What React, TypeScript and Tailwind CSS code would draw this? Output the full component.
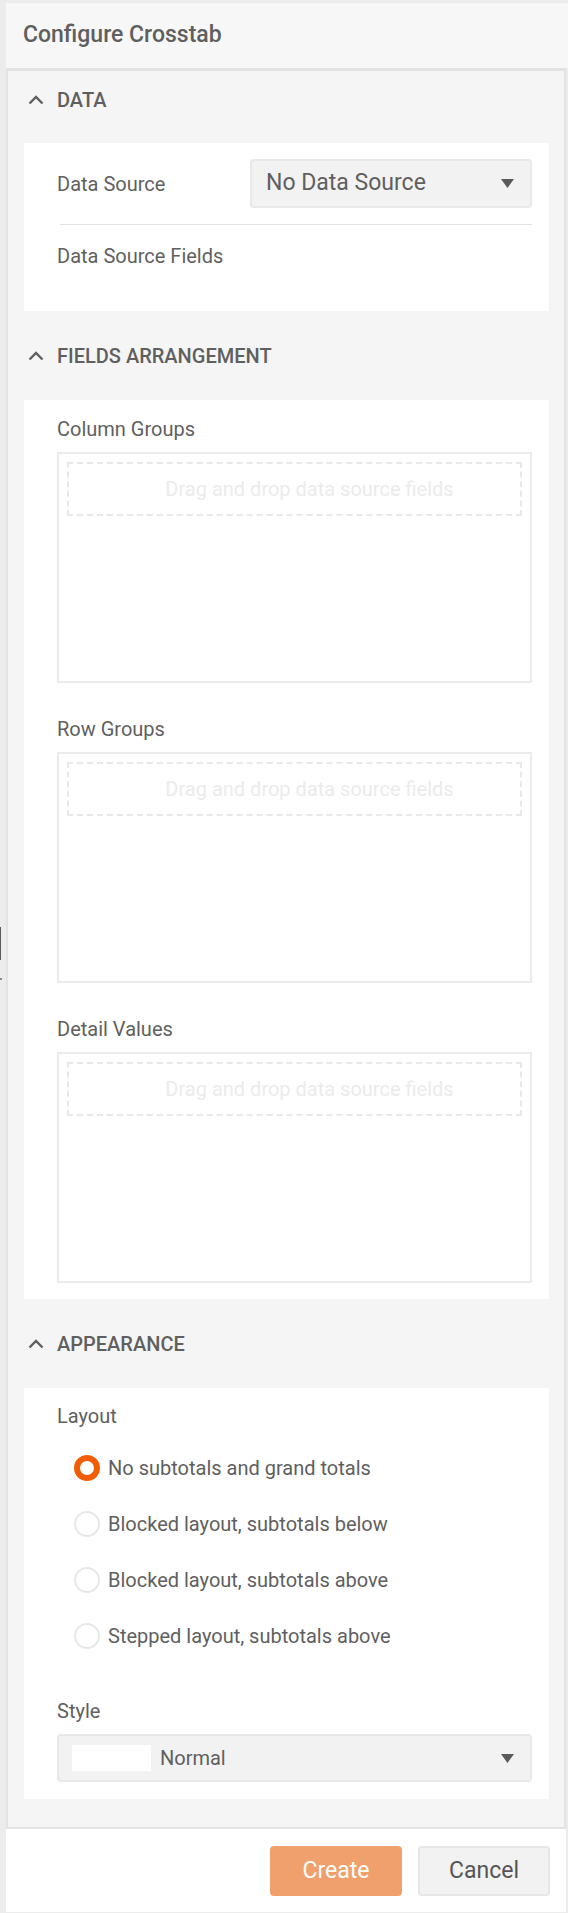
import React, { useState } from 'react';

const Chevron = () => (
  <svg width="16" height="10" viewBox="0 0 16 10" className="shrink-0">
    <polyline points="1.5,8.5 8,2 14.5,8.5" fill="none" stroke="#5f5f5f" strokeWidth="2.4" />
  </svg>
);

const Caret = () => (
  <svg width="13" height="9" viewBox="0 0 13 9" className="shrink-0">
    <polygon points="0,0 13,0 6.5,9" fill="#5a5a5a" />
  </svg>
);

const GroupHeader: React.FC<{ title: string; className: string }> = ({ title, className }) => (
  <div className={`flex items-center pl-[20px] ${className}`}>
    <Chevron />
    <span className="ml-[13px] text-[20px] font-medium uppercase text-[#5f5f5f]">{title}</span>
  </div>
);

const Card: React.FC<{ className?: string; children: React.ReactNode }> = ({ className = '', children }) => (
  <div className={`ml-[16px] mr-[15px] bg-white pl-[33px] pr-[17px] ${className}`}>{children}</div>
);

const DropZone = () => (
  <div className="h-[231px] border-2 border-[#ebebeb] p-[8px]">
    <div className="flex h-[54px] items-center justify-center border-2 border-dashed border-[#e8e8e8] pl-[30px] text-[20px] text-[#ebebeb]">
      Drag and drop data source fields
    </div>
  </div>
);

const LAYOUTS = [
  'No subtotals and grand totals',
  'Blocked layout, subtotals below',
  'Blocked layout, subtotals above',
  'Stepped layout, subtotals above',
];

export default function App() {
  const [layout, setLayout] = useState(0);

  return (
    <div className="relative h-[1913px] w-[568px] overflow-hidden bg-[#ececec] pl-[6px] pt-[3px] font-['Roboto',sans-serif] text-[#5f5f5f]">
      {/* stray mark from the page behind the dialog */}
      <div className="absolute left-0 top-[927px] h-[33px] w-[1px] bg-[#5a5a5a]" />
      <div className="absolute left-0 top-[978px] h-[2px] w-[2px] bg-[#8a8a8a]" />

      <div className="flex h-[65px] w-[562px] items-center bg-[#f7f7f7] pl-[17px] text-[23px] font-medium">
        Configure Crosstab
      </div>

      <div className="w-[560px] border-x-2 border-b-2 border-t-[3px] border-[#e3e3e3] bg-[#f5f5f5]">
        <GroupHeader title="Data" className="h-[58px] mb-[14px]" />
        <Card className="h-[168px] pt-[16px]">
          <div className="flex items-center">
            <div className="w-[193px] text-[20px]">Data Source</div>
            <div className="flex h-[49px] flex-1 items-center justify-between rounded-[4px] border-2 border-[#e8e8e8] bg-[#f2f2f2] pl-[14px] pr-[16px] text-[23px]">
              <span>No Data Source</span>
              <Caret />
            </div>
          </div>
          <div className="ml-[3px] mt-[16px] h-[1px] bg-[#e4e4e4]" />
          <div className="mt-[17px] text-[20px] leading-[28px]">Data Source Fields</div>
        </Card>

        <GroupHeader title="Fields Arrangement" className="h-[89px]" />
        <Card className="pb-[16px] pt-[15px]">
          <div className="text-[20px] leading-[28px]">Column Groups</div>
          <div className="mt-[9px]">
            <DropZone />
          </div>
          <div className="mt-[32px] text-[20px] leading-[28px]">Row Groups</div>
          <div className="mt-[9px]">
            <DropZone />
          </div>
          <div className="mt-[32px] text-[20px] leading-[28px]">Detail Values</div>
          <div className="mt-[9px]">
            <DropZone />
          </div>
        </Card>

        <GroupHeader title="Appearance" className="h-[89px]" />
        <Card className="pb-[17px] pt-[14px]">
          <div className="text-[20px] leading-[28px]">Layout</div>
          <div className="mt-[10px] flex flex-col">
            {LAYOUTS.map((label, i) => (
              <button
                key={label}
                onClick={() => setLayout(i)}
                className="flex h-[56px] items-center pl-[17px] text-left text-[20px]"
              >
                <span
                  className={`h-[26px] w-[26px] shrink-0 rounded-full bg-white ${
                    layout === i ? 'border-[6px] border-[#f25c05]' : 'border-2 border-[#e8e8e8]'
                  }`}
                />
                <span className="ml-[8px]">{label}</span>
              </button>
            ))}
          </div>
          <div className="mt-[33px] text-[20px] leading-[28px]">Style</div>
          <div className="mt-[9px] flex h-[48px] items-center rounded-[4px] border-2 border-[#e8e8e8] bg-[#f2f2f2] pl-[13px] pr-[16px] text-[20px]">
            <span className="h-[26px] w-[79px] bg-white" />
            <span className="ml-[9px] flex-1">Normal</span>
            <Caret />
          </div>
        </Card>
        <div className="h-[28px]" />
      </div>

      <div className="flex h-[83px] w-[560px] items-start justify-end gap-[16px] bg-white pr-[16px] pt-[17px]">
        <button className="h-[50px] w-[132px] rounded-[4px] bg-[#f0a06c] text-[23px] text-white">Create</button>
        <button className="h-[50px] w-[132px] rounded-[4px] border-2 border-[#e6e6e6] bg-[#f2f2f2] text-[23px] text-[#555]">
          Cancel
        </button>
      </div>
    </div>
  );
}
